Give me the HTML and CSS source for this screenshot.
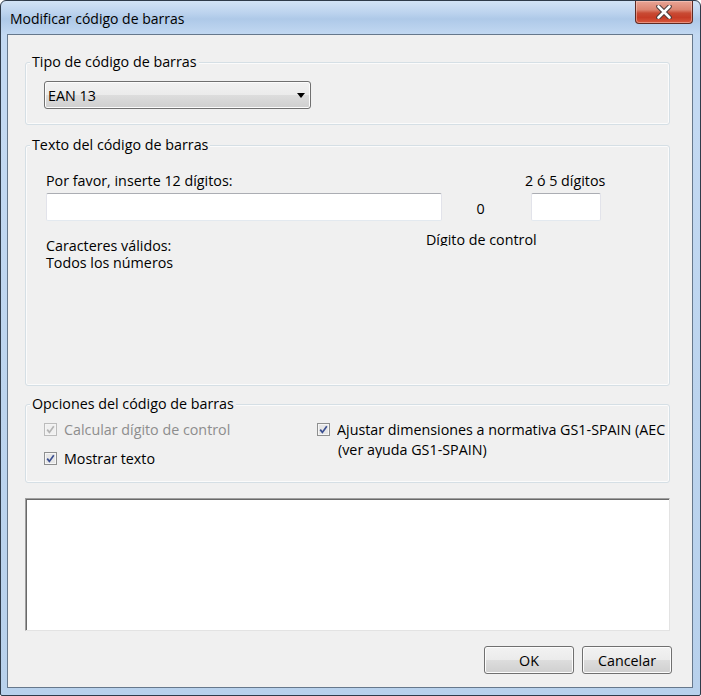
FILE: index.html
```html
<!DOCTYPE html>
<html lang="es">
<head>
<meta charset="utf-8">
<title>Modificar código de barras</title>
<link rel="stylesheet" href="styles.css">
</head>
<body>
<div class="window">
  <div class="titlebar">
    <span class="title">Modificar código de barras</span>
    <div class="close">
      <svg width="16" height="14" viewBox="0 0 16 14">
        <path d="M2.5 1.5 L13.5 12.5 M13.5 1.5 L2.5 12.5" stroke="#4a3a3a" stroke-width="4.6" stroke-linecap="round" fill="none"/>
        <path d="M2.5 1.5 L13.5 12.5 M13.5 1.5 L2.5 12.5" stroke="#ffffff" stroke-width="2.6" stroke-linecap="round" fill="none"/>
      </svg>
    </div>
  </div>
  <div class="client">
    <div class="group g1">
      <span class="legend">Tipo de código de barras</span>
      <div class="combo"><span class="combo-text">EAN 13</span><span class="arrow"></span></div>
    </div>

    <div class="group g2">
      <span class="legend">Texto del código de barras</span>
      <div class="row-a">
        <span class="lbl-main">Por favor, inserte 12 dígitos:</span>
        <span class="lbl-ext">2 ó 5 dígitos</span>
      </div>
      <div class="row-b">
        <div class="edit edit-main"></div>
        <span class="check-digit">0</span>
        <div class="edit edit-ext"></div>
      </div>
      <div class="row-c">
        <div class="valid">
          <div class="vline">Caracteres válidos:</div>
          <div class="vline">Todos los números</div>
        </div>
        <div class="ctrl-label">Dígito de control</div>
      </div>
    </div>

    <div class="group g3">
      <span class="legend">Opciones del código de barras</span>
      <div class="opts">
        <div class="opt-col">
          <div class="opt disabled">
            <svg class="cb" width="13" height="13" viewBox="0 0 13 13">
              <rect x="0.5" y="0.5" width="12" height="12" fill="#f4f4f4" stroke="#bcbcbc"/>
              <rect x="2" y="2" width="9" height="9" fill="#f0f0f0"/>
              <path d="M3.2 6.6 L5.4 9.4 L9.8 3.2" stroke="#b4b4b4" stroke-width="1.7" fill="none"/>
            </svg>
            <span>Calcular dígito de control</span>
          </div>
          <div class="opt second">
            <svg class="cb" width="13" height="13" viewBox="0 0 13 13">
              <rect x="0.5" y="0.5" width="12" height="12" fill="#f6f6f6" stroke="#8e8f8f"/>
              <rect x="2" y="2" width="9" height="9" fill="#e6e6e6"/>
              <path d="M3.2 6.6 L5.4 9.4 L9.8 3.2" stroke="#3b4f91" stroke-width="1.7" fill="none"/>
            </svg>
            <span>Mostrar texto</span>
          </div>
        </div>
        <div class="opt-right">
          <svg class="cb cb-top" width="13" height="13" viewBox="0 0 13 13">
            <rect x="0.5" y="0.5" width="12" height="12" fill="#f6f6f6" stroke="#8e8f8f"/>
            <rect x="2" y="2" width="9" height="9" fill="#e6e6e6"/>
            <path d="M3.2 6.6 L5.4 9.4 L9.8 3.2" stroke="#3b4f91" stroke-width="1.7" fill="none"/>
          </svg>
          <div class="opt-text">
            <div class="line1">Ajustar dimensiones a normativa GS1-SPAIN (AEC</div>
            <div class="line2">(ver ayuda GS1-SPAIN)</div>
          </div>
        </div>
      </div>
    </div>

    <div class="preview"></div>

    <div class="buttons">
      <div class="btn">OK</div>
      <div class="btn">Cancelar</div>
    </div>
  </div>
</div>
</body>
</html>
```

FILE: styles.css
```css
html, body {
  margin: 0;
  padding: 0;
  background: #ffffff;
}

body {
  font-family: "Open Sans", "Noto Sans", sans-serif;
  font-size: 14.3px;
  line-height: 17px;
  color: #000;
}

.window {
  width: 701px;
  height: 696px;
  box-sizing: border-box;
  border: 1px solid #2f3b4a;
  border-radius: 6px 6px 2px 2px;
  background: linear-gradient(180deg, #d2e3f6 0px, #bcd3ee 12px, #aec9e8 18px, #c3d9f2 34px, #c3d9f2 120px, #bcd4ee 400px, #b8d1ec 100%);
  padding: 0 7px 7px 6px;
  display: flex;
  flex-direction: column;
}

.titlebar {
  height: 33px;
  display: flex;
  align-items: flex-start;
  justify-content: space-between;
}

.title {
  margin-top: 9px;
  margin-left: 3px;
  font-size: 14px;
  color: #000;
}

.close {
  width: 58px;
  height: 23px;
  margin-right: 0;
  box-sizing: border-box;
  border: 1px solid #5e2a22;
  border-top: none;
  border-radius: 0 0 4px 4px;
  background: linear-gradient(180deg, #e9a596 0%, #dc8470 40%, #c84a33 55%, #c63c26 75%, #d8583d 100%);
  box-shadow: inset 0 0 0 1px rgba(255, 220, 210, 0.45);
  display: flex;
  align-items: center;
  justify-content: center;
}

.client {
  flex: 1;
  border: 1px solid #66788c;
  background: #f0f0f0;
  display: flex;
  flex-direction: column;
}

.group {
  position: relative;
  box-sizing: border-box;
  margin: 0 22px 0 17px;
  border: 1px solid #d5dfe5;
  border-radius: 3px;
  box-shadow: inset 0 0 0 1px #fbfbfb;
}

.legend {
  position: absolute;
  top: -10px;
  left: 4px;
  padding: 0 2px;
  background: #f0f0f0;
  white-space: nowrap;
}

.g1 {
  margin-top: 27px;
  height: 63px;
  padding: 18px 0 0 18px;
}

.combo {
  width: 267px;
  height: 28px;
  box-sizing: border-box;
  border: 1px solid #707070;
  border-radius: 3px;
  background: linear-gradient(180deg, #f2f2f2 0%, #ebebeb 50%, #dddddd 50%, #cfcfcf 100%);
  box-shadow: inset 0 0 0 1px #fcfcfc;
  display: flex;
  align-items: center;
  justify-content: space-between;
  padding: 0 5px 0 3px;
}

.arrow {
  width: 0;
  height: 0;
  border-left: 4px solid transparent;
  border-right: 4px solid transparent;
  border-top: 5px solid #000;
  margin-top: 1px;
}

.g2 {
  margin-top: 20px;
  height: 241px;
  padding: 26px 0 0 20px;
}

.row-a {
  display: flex;
}

.lbl-main {
  width: 479px;
}

.row-b {
  display: flex;
  align-items: center;
  margin-top: 4px;
}

.edit {
  height: 28px;
  box-sizing: border-box;
  background: #fff;
  border: 1px solid #e2e3ea;
  border-top-color: #abadb3;
  border-bottom-color: #e3e9ef;
  border-radius: 2px;
}

.edit-main {
  width: 396px;
}

.check-digit {
  width: 77px;
  text-align: center;
  margin-top: 2px;
}

.edit-ext {
  width: 70px;
  margin-left: 12px;
}

.row-c {
  display: flex;
  align-items: flex-start;
  margin-top: 10px;
}

.valid {
  width: 380px;
  margin-top: 6px;
}

.vline {
  height: 17.4px;
  white-space: nowrap;
}

.ctrl-label {
  height: 15px;
  overflow: hidden;
  white-space: nowrap;
}

.g3 {
  margin-top: 18px;
  height: 79px;
  padding: 16px 0 0 18px;
}

.opts {
  display: flex;
}

.opt-col {
  width: 273px;
  display: flex;
  flex-direction: column;
}

.opt {
  display: flex;
  align-items: center;
  gap: 7px;
}

.opt.second {
  margin-top: 12px;
}

.opt.disabled span {
  color: #8d8d8d;
}

.cb {
  flex: none;
  display: block;
}

.opt-right {
  display: flex;
  align-items: flex-start;
  gap: 7px;
}

.cb-top {
  margin-top: 2px;
}

.opt-text {
  width: 329px;
  overflow: hidden;
  white-space: nowrap;
}

.line2 {
  margin-top: 3px;
  padding-left: 1px;
}

.preview {
  margin: 15px 22px 0 17px;
  height: 133px;
  box-sizing: border-box;
  background: #fff;
  border-top: 1px solid #a0a0a0;
  border-left: 1px solid #a0a0a0;
  border-right: 1px solid #e3e3e3;
  border-bottom: 1px solid #e3e3e3;
  box-shadow: inset 1px 1px 0 #696969;
}

.buttons {
  display: flex;
  justify-content: flex-end;
  gap: 8px;
  margin: 15px 20px 0 0;
}

.btn {
  width: 90px;
  height: 28px;
  box-sizing: border-box;
  border: 1px solid #707070;
  border-radius: 3px;
  background: linear-gradient(180deg, #f2f2f2 0%, #ebebeb 50%, #dddddd 50%, #cfcfcf 100%);
  box-shadow: inset 0 0 0 1px #fcfcfc;
  display: flex;
  align-items: center;
  justify-content: center;
}
```
